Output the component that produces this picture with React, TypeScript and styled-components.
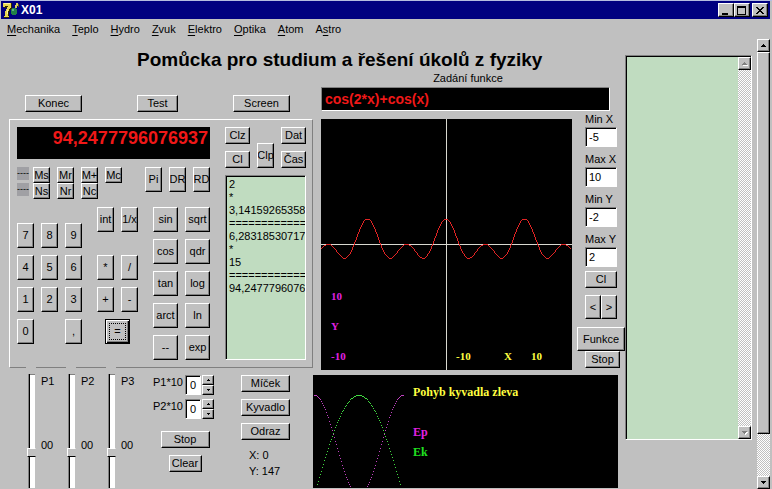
import React from "react";
import styled, { createGlobalStyle, css } from "styled-components";

const face = "#c0c0c0";
const shade = "#808080";
const mint = "#c0dcc0";

const GlobalStyle = createGlobalStyle`
  * { box-sizing: border-box; }
  body {
    margin: 0;
    overflow: hidden;
    background: ${face};
    color: #000;
    font: 11px/13px "Liberation Sans", Arial, sans-serif;
  }
  button, input, textarea { font: inherit; color: inherit; border-radius: 0; margin: 0; outline: none; }
`;

const raised = css`
  border: 1px solid;
  border-color: #fff #000 #000 #fff;
  box-shadow: inset -1px -1px ${shade};
  background: ${face};
`;

const sunken = css`
  border: 1px solid;
  border-color: ${shade} #fff #fff ${shade};
  box-shadow: inset 1px 1px #000;
`;

const checker = css`
  background: repeating-conic-gradient(#fff 0 25%, ${face} 0 50%) 0 0 / 2px 2px;
`;

const Window = styled.div`
  min-height: 100vh;
  display: flex;
  flex-direction: column;
  padding: 1px 2px 0 0;
  border-top: 0;
  box-shadow: inset 0 1px #b4bce0;
`;

const TitleBar = styled.header`
  display: flex;
  align-items: center;
  height: 18px;
  margin-left: 1px;
  padding: 0 2px;
  background: #000080;
  color: #fff;
`;

const WindowTitle = styled.span`
  flex: 1;
  margin-left: 2px;
  font-size: 12px;
  font-weight: bold;
`;

const CaptionButton = styled.button<{ $apart?: boolean }>`
  ${raised}
  display: flex;
  align-items: center;
  justify-content: center;
  width: 16px;
  height: 14px;
  padding: 0;
  margin-left: ${(p) => (p.$apart ? 2 : 0)}px;
`;

const Menu = styled.nav`
  display: flex;
  gap: 12px;
  height: 20px;
  padding: 4px 7px 0;
`;

const MenuLink = styled.a`
  color: #000;
  text-decoration: none;
  u { text-underline-offset: 2px; }
`;

const Body = styled.div`
  flex: 1;
  display: flex;
`;

const Main = styled.main`
  flex: 1;
  min-width: 0;
`;

const Heading = styled.h1`
  margin: 0;
  padding: 9px 0 0 137px;
  height: 33px;
  font-size: 19px;
  line-height: 24px;
  white-space: nowrap;
`;

const Columns = styled.div`
  display: grid;
  grid-template-columns: 313px minmax(0, 1fr);
`;

const Actions = styled.div`
  display: flex;
  gap: 55px;
  padding: 23px 0 7px 25px;
`;

const Button = styled.button<{ $w?: number; $h?: number }>`
  ${raised}
  display: flex;
  align-items: center;
  justify-content: center;
  flex: none;
  width: ${(p) => p.$w ?? 17}px;
  height: ${(p) => p.$h ?? 17}px;
  padding: 0;
  overflow: hidden;
  white-space: nowrap;
`;

const EqualsButton = styled(Button)`
  grid-column: 1 / -1;
  justify-self: center;
  border-color: #000;
  box-shadow: inset 1px 1px #fff, inset -1px -1px #000, inset -2px -2px ${shade};
  span {
    width: 17px;
    height: 17px;
    line-height: 15px;
    border: 1px dotted #000;
  }
`;

const Calculator = styled.section`
  display: flex;
  gap: 15px;
  margin-left: 9px;
  padding: 7px 6px 7px 7px;
  border: 1px solid;
  border-color: #fff ${shade} ${shade} #fff;
`;

const Keypad = styled.div`
  display: flex;
  flex-direction: column;
  gap: 8px;
  width: 193px;
`;

const Display = styled.output`
  height: 32px;
  padding: 0 2px;
  background: #000;
  color: #f01818;
  font-size: 18px;
  font-weight: bold;
  line-height: 22px;
  text-align: right;
`;

const Spread = styled.div`
  display: flex;
  justify-content: space-between;
  align-items: flex-start;
`;

const MemoryRow = styled.div`
  display: flex;
  gap: 7px;
`;

const MemoryMark = styled.span`
  width: 12px;
  height: 13px;
  margin-right: -3px;
  background: #a0a0a4;
  font-size: 9px;
  white-space: nowrap;
`;

const Keys = styled.div<{ $cols: number; $w?: number; $top?: number }>`
  display: grid;
  grid-template-columns: repeat(${(p) => p.$cols}, ${(p) => p.$w ?? 17}px);
  gap: 7px;
  margin-top: ${(p) => p.$top ?? 0}px;
`;

const History = styled.div`
  display: flex;
  flex-direction: column;
  gap: 7px;
  width: 81px;
`;

const HistoryButtons = styled.div`
  display: grid;
  grid-template-columns: 25px 17px 25px;
  grid-template-rows: 17px 17px;
  gap: 7px;
`;

const ClipButton = styled(Button)`
  grid-area: 1 / 2 / 3 / 3;
  align-self: end;
`;

const Tape = styled.textarea`
  ${sunken}
  flex: 1;
  width: 100%;
  padding: 2px 0 0 3px;
  background: ${mint};
  resize: none;
  overflow: hidden;
  white-space: pre;
`;

const Controls = styled.section`
  display: flex;
  height: 120px;
  padding: 7px 0 0 26px;
`;

const SliderGroup = styled.div`
  display: flex;
  width: 40px;
  gap: 5px;
`;

const Slider = styled.input`
  appearance: none;
  writing-mode: vertical-lr;
  width: 10px;
  height: 121px;
  margin-top: -8px;
  padding-top: 7px;
  background: ${face};
  &::-webkit-slider-runnable-track {
    width: 7px;
    background: #fff;
    border-left: 1px solid ${shade};
    box-shadow: inset 1px 0 #000, inset 0 1px ${shade};
  }
  &::-webkit-slider-thumb {
    appearance: none;
    width: 9px;
    height: 9px;
    margin-left: -2px;
    background: ${face};
    border: 1px solid;
    border-color: #fff ${face} #000 #fff;
  }
`;

const SliderText = styled.label`
  display: flex;
  flex-direction: column;
  gap: 51px;
`;

const Params = styled.div`
  display: flex;
  flex-direction: column;
  align-items: center;
  width: 64px;
  margin: 0 24px 0 7px;
`;

const Param = styled.div`
  display: flex;
  width: 100%;
  height: 20px;
  margin-bottom: 4px;
`;

const ParamLabel = styled.label`
  width: 32px;
  padding-top: 1px;
`;

const ParamInput = styled.input`
  ${sunken}
  width: 16px;
  padding: 0 2px 0 4px;
  background: #fff;
`;

const Spinner = styled.div`
  display: flex;
  flex-direction: column;
  margin-left: 1px;
`;

const StopGroup = styled.div`
  display: flex;
  flex-direction: column;
  align-items: center;
  gap: 7px;
  padding-top: 8px;
`;

const Demos = styled.div`
  display: flex;
  flex-direction: column;
  gap: 7px;
`;

const Position = styled.div`
  padding: 0 0 0 8px;
  line-height: 16px;
`;

const Plotting = styled.div`
  padding-left: 8px;
`;

const FunctionLabel = styled.label`
  display: block;
  height: 15px;
  margin-right: 10px;
  text-align: center;
`;

const FunctionInput = styled.input`
  ${sunken}
  display: block;
  width: calc(100% - 15px);
  height: 24px;
  padding: 0 3px;
  background: #000;
  color: #f01818;
  font-size: 14px;
  font-weight: bold;
`;

const PlotRow = styled.div`
  display: flex;
  align-items: flex-start;
  gap: 5px;
`;

const Plot = styled.svg`
  flex: 1;
  min-width: 0;
  margin-top: 8px;
  background: #000;
  font: bold 11px "Liberation Serif", serif;
`;

const Range = styled.div`
  width: 48px;
  display: flex;
  flex-direction: column;
`;

const RangeField = styled.label`
  display: flex;
  flex-direction: column;
  margin: 0 8px 4px;
  line-height: 16px;
  white-space: nowrap;
`;

const RangeInput = styled.input`
  ${sunken}
  width: 32px;
  height: 20px;
  padding: 0 3px;
  background: #fff;
`;

const RangeButtons = styled.div<{ $gap: number }>`
  display: flex;
  margin: 0 0 ${(p) => p.$gap}px 8px;
`;

const Pendulum = styled.svg`
  display: block;
  width: calc(100% - 7px);
  height: 113px;
  margin-top: 5px;
  background: #000;
  font: bold 12px "Liberation Serif", serif;
`;

const Notes = styled.div`
  ${sunken}
  display: flex;
  width: 127px;
  height: 385px;
  margin: 16px 5px 0 0;
  padding: 1px 0 0 1px;
`;

const NotesText = styled.textarea`
  flex: 1;
  min-width: 0;
  border: 0;
  background: ${mint};
  resize: none;
`;

const ScrollTrack = styled.div`
  ${checker}
  display: flex;
  flex-direction: column;
  width: 13px;
`;

const ScrollThumb = styled.div`
  ${raised}
  flex: 9;
`;

const ScrollSpace = styled.div<{ $grow: number }>`
  flex: ${(p) => p.$grow};
`;

const Arrow = ({ down, dim }: { down?: boolean; dim?: boolean }) => {
  const d = down ? "M0 0h5v1h-1v1h-1v1h-1v-1h-1v-1h-1z" : "M2 0h1v1h1v1h1v1h-5v-1h1v-1h1z";
  return (
    <svg width="6" height="4" shapeRendering="crispEdges" aria-hidden="true">
      {dim && <path d={d} fill="#fff" transform="translate(1 1)" />}
      <path d={d} fill={dim ? shade : "#000"} />
    </svg>
  );
};

const SmallArrow = ({ down }: { down?: boolean }) => (
  <svg width="3" height="2" shapeRendering="crispEdges" aria-hidden="true">
    <path d={down ? "M0 0h3v1h-1v1h-1v-1h-1z" : "M1 0h1v1h1v1h-3v-1h1z"} />
  </svg>
);

const AppIcon = () => (
  <svg width="16" height="16" viewBox="0 0 16 16" shapeRendering="crispEdges" aria-hidden="true">
    <path d="M1 1h8v5l-3 5v5h-5v-2h2v-3l3-5h-5z" fill="#302800" />
    <path d="M0 1h8v4l-3 5v4h1v1h-5v-1h1v-4l3-6h-3v1h-2z" fill="#e8d850" />
    <path d="M1 1h6v1h-6zM4 8h1v4h-1z" fill="#fff8a0" />
    <path d="M9 6h4v1h1v5h-1v1h-4v-1h-1v-5h1z" fill="#208048" />
    <path d="M9 7h2v2h-2z" fill="#60b088" />
    <path d="M13 1h2v3h-1v2h-2v-3h1z" fill="#d8d060" />
    <path d="M15 2h1v3h-1z" fill="#605810" />
  </svg>
);

const menu = ["Mechanika", "Teplo", "Hydro", "Zvuk", "Elektro", "Optika", "Atom", "Astro"];
const digits = ["7", "8", "9", "4", "5", "6", "1", "2", "3", "0", "", ","];
const functions = ["sin", "sqrt", "cos", "qdr", "tan", "log", "arct", "ln", "--", "exp"];
const tape = [
  "2", "*", "3,14159265358979", "================", "6,28318530717959",
  "*", "15", "================", "94,2477796076937",
].join("\n");

const curve = Array.from({ length: 251 }, (_, px) => {
  const x = (px - 125) / 12.5;
  return `${px},${Math.round(125 - 12.5 * (Math.cos(2 * x) + Math.cos(x)))}`;
}).join(" ");

const dots = (energy: (phase: number) => number) =>
  Array.from({ length: 90 }, (_, i) => {
    const y = Math.round(120 - 100 * energy((i * Math.PI) / 89));
    return `M${i + 1} ${y}h1v1h-1z`;
  }).join("");

const potential = dots((t) => Math.cos(t) ** 2);
const kinetic = dots((t) => Math.sin(t));

export default function App() {
  return (
    <>
      <GlobalStyle />
      <Window>
        <TitleBar>
          <AppIcon />
          <WindowTitle>X01</WindowTitle>
          <CaptionButton aria-label="Minimize">
            <svg width="10" height="9" shapeRendering="crispEdges"><path d="M1 7h6v2h-6z" /></svg>
          </CaptionButton>
          <CaptionButton aria-label="Maximize">
            <svg width="10" height="9" shapeRendering="crispEdges"><path d="M0 0h9v9h-9zM1 2v6h7v-6z" fillRule="evenodd" /></svg>
          </CaptionButton>
          <CaptionButton $apart aria-label="Close">
            <svg width="8" height="7" shapeRendering="crispEdges">
              <path d="M0 0h2v1h1v1h2v-1h1v-1h2v1h-1v1h-1v1h-1v1h1v1h1v1h1v1h-2v-1h-1v-1h-2v1h-1v1h-2v-1h1v-1h1v-1h1v-1h-1v-1h-1v-1h-1z" />
            </svg>
          </CaptionButton>
        </TitleBar>
        <Menu>
          {menu.map((m) => (
            <MenuLink href="#" key={m}>
              {m === "Astro" ? <>A<u>s</u>tro</> : <><u>{m[0]}</u>{m.slice(1)}</>}
            </MenuLink>
          ))}
        </Menu>
        <Body>
          <Main>
            <Heading>Pomůcka pro studium a řešení úkolů z fyziky</Heading>
            <Columns>
              <div>
                <Actions>
                  <Button $w={57}>Konec</Button>
                  <Button $w={41}>Test</Button>
                  <Button $w={57}>Screen</Button>
                </Actions>
                <Calculator>
                  <Keypad>
                    <Display>94,2477796076937</Display>
                    <Spread>
                      <div>
                        <MemoryRow>
                          <MemoryMark>----</MemoryMark>
                          {["Ms", "Mr", "M+", "Mc"].map((k) => <Button $h={16} key={k}>{k}</Button>)}
                        </MemoryRow>
                        <MemoryRow>
                          <MemoryMark>----</MemoryMark>
                          {["Ns", "Nr", "Nc"].map((k) => <Button $h={16} key={k}>{k}</Button>)}
                        </MemoryRow>
                      </div>
                      <Keys $cols={3}>
                        {["Pi", "DR", "RD"].map((k) => <Button $h={25} key={k}>{k}</Button>)}
                      </Keys>
                    </Spread>
                    <Spread>
                      <Keys $cols={3} $top={16}>
                        {digits.map((k, i) => (k ? <Button $h={25} key={i}>{k}</Button> : <span key={i} />))}
                      </Keys>
                      <div>
                        <Keys $cols={2}>
                          <Button $h={25}>int</Button>
                          <Button $h={25}>1/x</Button>
                        </Keys>
                        <Keys $cols={2} $top={23}>
                          {["*", "/", "+", "-"].map((k) => <Button $h={25} key={k}>{k}</Button>)}
                          <EqualsButton $w={25} $h={25}><span>=</span></EqualsButton>
                        </Keys>
                      </div>
                      <Keys $cols={2} $w={25}>
                        {functions.map((k) => <Button $w={25} $h={25} key={k}>{k}</Button>)}
                      </Keys>
                    </Spread>
                  </Keypad>
                  <History>
                    <HistoryButtons>
                      <Button $w={25}>Clz</Button>
                      <ClipButton $h={25}>Clp</ClipButton>
                      <Button $w={25}>Dat</Button>
                      <Button $w={25}>Cl</Button>
                      <Button $w={25}>Čas</Button>
                    </HistoryButtons>
                    <Tape aria-label="Výpočty" wrap="off" defaultValue={tape} />
                  </History>
                </Calculator>
                <Controls>
                  {["P1", "P2", "P3"].map((p) => (
                    <SliderGroup key={p}>
                      <Slider type="range" id={p} min={0} max={100} defaultValue={70} />
                      <SliderText htmlFor={p}><span>{p}</span><span>00</span></SliderText>
                    </SliderGroup>
                  ))}
                  <Params>
                    {["P1*10", "P2*10"].map((p) => (
                      <Param key={p}>
                        <ParamLabel htmlFor={p}>{p}</ParamLabel>
                        <ParamInput id={p} defaultValue="0" />
                        <Spinner>
                          <Button $w={12} $h={10} aria-label="+"><SmallArrow /></Button>
                          <Button $w={12} $h={10} aria-label="-"><SmallArrow down /></Button>
                        </Spinner>
                      </Param>
                    ))}
                    <StopGroup>
                      <Button $w={49}>Stop</Button>
                      <Button $w={33}>Clear</Button>
                    </StopGroup>
                  </Params>
                  <Demos>
                    <Button $w={49}>Míček</Button>
                    <Button $w={49}>Kyvadlo</Button>
                    <Button $w={49}>Odraz</Button>
                    <Position>X: 0<br />Y: 147</Position>
                  </Demos>
                </Controls>
              </div>
              <div>
                <Plotting>
                  <FunctionLabel htmlFor="fn">Zadání funkce</FunctionLabel>
                  <FunctionInput id="fn" defaultValue="cos(2*x)+cos(x)" />
                  <PlotRow>
                    <Plot viewBox="0 0 251 251" role="img" aria-label="cos(2*x)+cos(x)">
                      <path d="M0 125.5h251M125.5 0v251" stroke="#d8d8d0" shapeRendering="crispEdges" />
                      <polyline points={curve} fill="none" stroke="#e02424" shapeRendering="crispEdges" />
                      <g fill="#e020e0">
                        <text x="10" y="181">10</text>
                        <text x="10" y="211">Y</text>
                        <text x="10" y="241">-10</text>
                      </g>
                      <g fill="#ffff40">
                        <text x="135" y="241">-10</text>
                        <text x="183" y="241">X</text>
                        <text x="210" y="241">10</text>
                      </g>
                    </Plot>
                    <Range>
                      {[["Min X", "-5"], ["Max X", "10"], ["Min Y", "-2"], ["Max Y", "2"]].map(([name, value]) => (
                        <RangeField key={name}>
                          {name}
                          <RangeInput defaultValue={value} />
                        </RangeField>
                      ))}
                      <RangeButtons $gap={7}><Button $w={32}>Cl</Button></RangeButtons>
                      <RangeButtons $gap={8}>
                        <Button $w={16} $h={24}>&lt;</Button>
                        <Button $w={16} $h={24}>&gt;</Button>
                      </RangeButtons>
                      <Button $w={48} $h={24}>Funkce</Button>
                      <RangeButtons $gap={0}><Button $w={35}>Stop</Button></RangeButtons>
                    </Range>
                  </PlotRow>
                </Plotting>
                <Pendulum>
                  <g shapeRendering="crispEdges">
                    <path d={potential} fill="#c040c0" />
                    <path d={kinetic} fill="#40d840" />
                  </g>
                  <text x="100" y="21" fill="#ffff40">Pohyb kyvadla zleva</text>
                  <text x="100" y="61" fill="#e020e0">Ep</text>
                  <text x="100" y="81" fill="#20e020">Ek</text>
                </Pendulum>
              </div>
            </Columns>
          </Main>
          <Notes>
            <NotesText aria-label="Poznámky" />
            <ScrollTrack>
              <Button $w={13} $h={13} disabled aria-label="Nahoru"><Arrow dim /></Button>
              <ScrollSpace $grow={1} />
              <Button $w={13} $h={13} disabled aria-label="Dolů"><Arrow down dim /></Button>
            </ScrollTrack>
          </Notes>
          <ScrollTrack>
            <Button $w={13} $h={13} aria-label="Nahoru"><Arrow /></Button>
            <ScrollThumb />
            <ScrollSpace $grow={1} />
            <Button $w={13} $h={13} aria-label="Dolů"><Arrow down /></Button>
          </ScrollTrack>
        </Body>
      </Window>
    </>
  );
}
